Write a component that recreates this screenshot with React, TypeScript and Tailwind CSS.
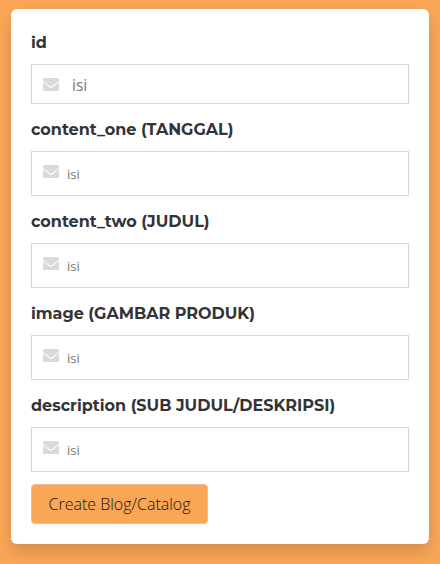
import { FaEnvelope } from "react-icons/fa";

type Field = { label: string; large?: boolean };

const fields: Field[] = [
  { label: "id", large: true },
  { label: "content_one (TANGGAL)" },
  { label: "content_two (JUDUL)" },
  { label: "image (GAMBAR PRODUK)" },
  { label: "description (SUB JUDUL/DESKRIPSI)" },
];

function FormField({ label, large }: Field) {
  return (
    <div className="mb-3">
      <div className="h-[35px]">
        <label className="inline-block whitespace-nowrap font-[Montserrat,Inter,sans-serif] text-base leading-[28px] font-bold text-[#343338]">
          {label}
        </label>
      </div>
      <div
        className={`flex border border-[#d8d8da] pl-[11px] ${large ? "h-10 pt-3" : "h-[45px] pt-[12px]"}`}
      >
        <FaEnvelope preserveAspectRatio="none" viewBox="0 64 512 384" className="mt-px h-[13px] w-4 shrink-0 text-[#dadadc]" />
        <input
          placeholder="isi"
          className={`min-w-0 flex-1 bg-transparent font-['Open_Sans',sans-serif] text-[#444] outline-none placeholder:text-[#757575] ${
            large ? "ml-[13px] h-4 text-[15.5px] leading-4" : "ml-2 mt-[2px] h-4 text-[13px] leading-4"
          }`}
        />
      </div>
    </div>
  );
}

export default function App() {
  return (
    <main className="h-[564px] w-[440px] overflow-hidden bg-[#f9a657] px-[11px] pt-[9px]">
      <form className="h-[535px] rounded-md bg-white p-5 shadow-[0_8px_16px_rgba(0,0,0,0.15)]">
        {fields.map((field) => (
          <FormField key={field.label} {...field} />
        ))}
        <button
          type="button"
          className="flex h-10 w-[177px] items-center justify-center whitespace-nowrap rounded border border-[#e5c19c] bg-[#f9a657] font-['Open_Sans',sans-serif] text-base font-light text-[#1c1510]"
        >
          Create Blog/Catalog
        </button>
      </form>
    </main>
  );
}
